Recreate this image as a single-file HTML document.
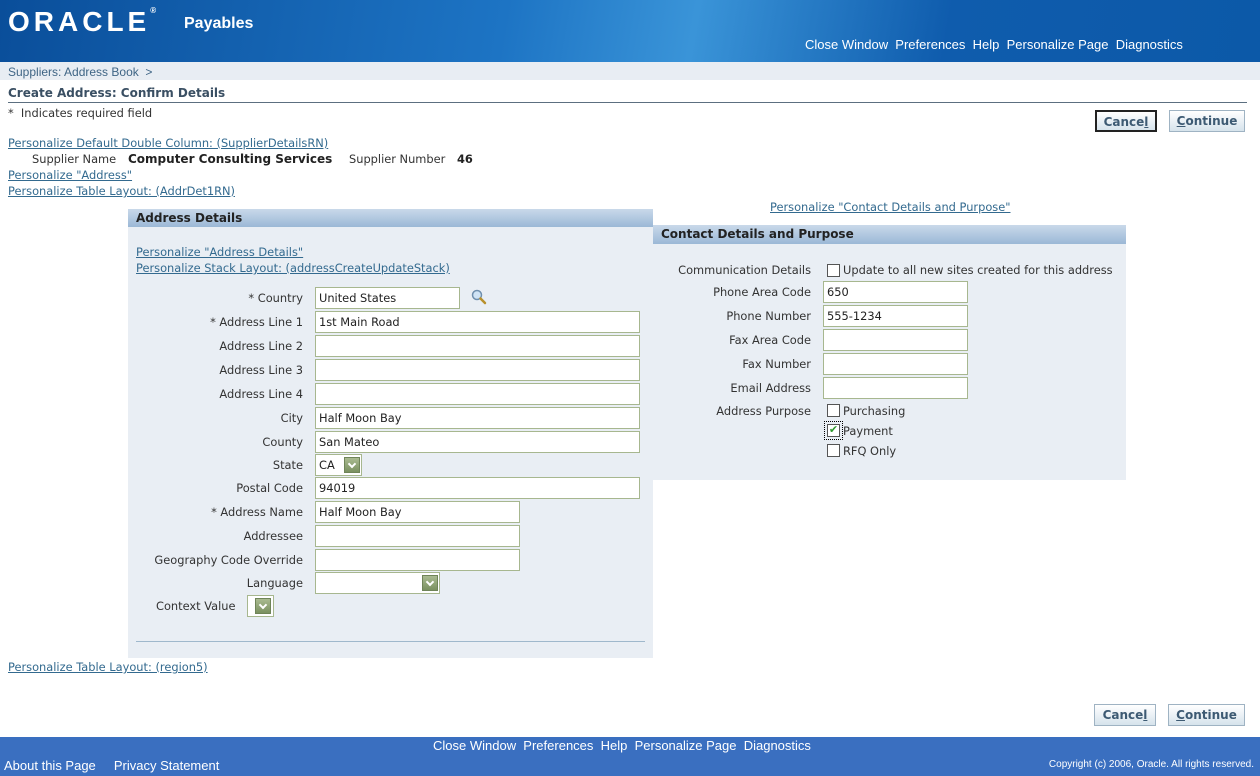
<!DOCTYPE html>
<html><head><meta charset="utf-8"><style>
*{margin:0;padding:0;box-sizing:border-box}
body{width:1260px;height:776px;position:relative;overflow:hidden;background:#fff;font-family:"DejaVu Sans","Liberation Sans",sans-serif;font-size:11.4px;color:#333}
.a{position:absolute;white-space:nowrap}
.lk{color:#336a8f;text-decoration:underline}
.lbl{position:absolute;text-align:right;white-space:nowrap;color:#333}
.in{position:absolute;height:22px;border:1px solid #a7b78f;background:#fff;padding:3px 0 0 3px;color:#222}
.sel{position:absolute;width:16px;height:16px;background:linear-gradient(#a9ba90,#7a9060);border:1px solid #6f8458}
.sel:after{content:"";position:absolute;left:4px;top:3px;width:4px;height:4px;border-right:2px solid #fff;border-bottom:2px solid #fff;transform:rotate(45deg)}
.cb{position:absolute;width:13px;height:13px;border:1px solid #555;background:#fff}
.btn{position:absolute;height:22px;border:1px solid #9fb3c3;background:linear-gradient(#fff,#d6e3ec);color:#3d5a73;font-weight:bold;font-size:12px;text-align:center;line-height:20px}
.hdr{position:absolute;background:linear-gradient(#c9d9ea,#9bb8d6);font-weight:bold;color:#222;font-size:12px;padding:2px 0 0 8px}
</style></head><body>
<div class="a" style="left:0;top:0;width:1260px;height:62px;background:linear-gradient(100deg,#0a4e9a 0%,#1d74c4 40%,#3a94d8 55%,#0f5cad 75%,#0c59a8 100%)"></div>
<div class="a" style="left:8px;top:6px;font-family:'Liberation Sans',sans-serif;font-size:28px;font-weight:bold;color:#fff;letter-spacing:4px">ORACLE<span style="font-size:8px;vertical-align:top;letter-spacing:0">®</span></div>
<div class="a" style="left:184px;top:15px;font-family:'Liberation Sans',sans-serif;font-size:16px;font-weight:bold;color:#fff">Payables</div>
<div class="a" style="left:805px;top:37px;font-family:'Liberation Sans',sans-serif;font-size:13px;color:#fff">Close Window&nbsp; Preferences&nbsp; Help&nbsp; Personalize Page&nbsp; Diagnostics</div>
<div class="a" style="left:0;top:62px;width:1260px;height:18px;background:#e8edf3"></div>
<div class="a" style="left:8px;top:65px;font-size:12px;color:#3f6585;font-family:'Liberation Sans',sans-serif">Suppliers: Address Book &nbsp;&gt;</div>
<div class="a" style="left:8px;top:86px;font-size:12px;font-weight:bold;color:#3a4f63">Create Address: Confirm Details</div>
<div class="a" style="left:8px;top:102px;width:1239px;height:1px;background:#5c6f80"></div>
<div class="a" style="left:8px;top:106px">* &nbsp;Indicates required field</div>
<div class="btn" style="left:1095px;top:110px;width:62px;border:2px solid #222">Cance<u>l</u></div>
<div class="btn" style="left:1169px;top:110px;width:76px"><u>C</u>ontinue</div>
<div class="a lk" style="left:8px;top:136px">Personalize Default Double Column: (SupplierDetailsRN)</div>
<div class="a" style="left:32px;top:152px">Supplier Name</div>
<div class="a" style="left:128px;top:152px;font-weight:bold;font-size:12px;color:#222">Computer Consulting Services</div>
<div class="a" style="left:349px;top:152px">Supplier Number</div>
<div class="a" style="left:457px;top:152px;font-weight:bold;color:#222">46</div>
<div class="a lk" style="left:8px;top:168px">Personalize "Address"</div>
<div class="a lk" style="left:8px;top:184px">Personalize Table Layout: (AddrDet1RN)</div>

<div class="a" style="left:128px;top:209px;width:525px;height:449px;background:#e9eef4"></div>
<div class="hdr" style="left:128px;top:209px;width:525px;height:18px">Address Details</div>
<div class="a lk" style="left:136px;top:245px">Personalize "Address Details"</div>
<div class="a lk" style="left:136px;top:261px">Personalize Stack Layout: (addressCreateUpdateStack)</div>

<div class="lbl" style="right:957px;top:291px">* Country</div><div class="in" style="left:315px;top:287px;width:145px">United States</div>
<svg class="a" style="left:471px;top:289px" width="16" height="16" viewBox="0 0 16 16"><circle cx="6" cy="6" r="4.5" fill="#cfe3f5" stroke="#6f8fae" stroke-width="1.5"/><path d="M9.5 9.5L14 14" stroke="#b8902c" stroke-width="2.5" stroke-linecap="round"/></svg>
<div class="lbl" style="right:957px;top:315px">* Address Line 1</div><div class="in" style="left:315px;top:311px;width:325px">1st Main Road</div>
<div class="lbl" style="right:957px;top:339px">Address Line 2</div><div class="in" style="left:315px;top:335px;width:325px"></div>
<div class="lbl" style="right:957px;top:363px">Address Line 3</div><div class="in" style="left:315px;top:359px;width:325px"></div>
<div class="lbl" style="right:957px;top:387px">Address Line 4</div><div class="in" style="left:315px;top:383px;width:325px"></div>
<div class="lbl" style="right:957px;top:411px">City</div><div class="in" style="left:315px;top:407px;width:325px">Half Moon Bay</div>
<div class="lbl" style="right:957px;top:435px">County</div><div class="in" style="left:315px;top:431px;width:325px">San Mateo</div>
<div class="lbl" style="right:957px;top:458px">State</div><div class="in" style="left:315px;top:454px;width:47px">CA</div><div class="sel" style="left:344px;top:457px"></div>
<div class="lbl" style="right:957px;top:481px">Postal Code</div><div class="in" style="left:315px;top:477px;width:325px">94019</div>
<div class="lbl" style="right:957px;top:505px">* Address Name</div><div class="in" style="left:315px;top:501px;width:205px">Half Moon Bay</div>
<div class="lbl" style="right:957px;top:529px">Addressee</div><div class="in" style="left:315px;top:525px;width:205px"></div>
<div class="lbl" style="right:957px;top:553px">Geography Code Override</div><div class="in" style="left:315px;top:549px;width:205px"></div>
<div class="lbl" style="right:957px;top:576px">Language</div><div class="in" style="left:315px;top:572px;width:125px"></div><div class="sel" style="left:422px;top:575px"></div>
<div class="a" style="left:156px;top:599px">Context Value</div><div class="in" style="left:247px;top:595px;width:27px"></div><div class="sel" style="left:255px;top:598px"></div>
<div class="a" style="left:136px;top:641px;width:509px;height:1px;background:#9fb8cc"></div>

<div class="a lk" style="left:770px;top:200px">Personalize "Contact Details and Purpose"</div>
<div class="a" style="left:653px;top:225px;width:473px;height:255px;background:#e9eef4"></div>
<div class="hdr" style="left:653px;top:225px;width:473px;height:19px">Contact Details and Purpose</div>
<div class="lbl" style="right:449px;top:263px">Communication Details</div>
<div class="cb" style="left:827px;top:264px"></div><div class="a" style="left:843px;top:263px">Update to all new sites created for this address</div>
<div class="lbl" style="right:449px;top:285px">Phone Area Code</div><div class="in" style="left:823px;top:281px;width:145px">650</div>
<div class="lbl" style="right:449px;top:309px">Phone Number</div><div class="in" style="left:823px;top:305px;width:145px">555-1234</div>
<div class="lbl" style="right:449px;top:333px">Fax Area Code</div><div class="in" style="left:823px;top:329px;width:145px"></div>
<div class="lbl" style="right:449px;top:357px">Fax Number</div><div class="in" style="left:823px;top:353px;width:145px"></div>
<div class="lbl" style="right:449px;top:381px">Email Address</div><div class="in" style="left:823px;top:377px;width:145px"></div>
<div class="lbl" style="right:449px;top:404px">Address Purpose</div>
<div class="cb" style="left:827px;top:404px"></div><div class="a" style="left:843px;top:404px">Purchasing</div>
<div class="a" style="left:824px;top:421px;width:19px;height:19px;border:1px dotted #000"></div>
<div class="cb" style="left:827px;top:424px;color:#2f9a2f;font-size:11px;line-height:10px;text-align:center">✔</div><div class="a" style="left:843px;top:424px">Payment</div>
<div class="cb" style="left:827px;top:444px"></div><div class="a" style="left:843px;top:444px">RFQ Only</div>

<div class="a lk" style="left:8px;top:660px">Personalize Table Layout: (region5)</div>
<div class="btn" style="left:1094px;top:704px;width:62px">Cance<u>l</u></div>
<div class="btn" style="left:1168px;top:704px;width:77px"><u>C</u>ontinue</div>

<div class="a" style="left:0;top:737px;width:1260px;height:39px;background:#3a6fc0"></div>
<div class="a" style="left:433px;top:738px;font-family:'Liberation Sans',sans-serif;font-size:13px;color:#fff">Close Window&nbsp; Preferences&nbsp; Help&nbsp; Personalize Page&nbsp; Diagnostics</div>
<div class="a" style="left:4px;top:758px;font-family:'Liberation Sans',sans-serif;font-size:13px;color:#fff">About this Page &nbsp;&nbsp;&nbsp; Privacy Statement</div>
<div class="a" style="right:6px;top:759px;font-family:'Liberation Sans',sans-serif;font-size:10px;color:#fff">Copyright (c) 2006, Oracle. All rights reserved.</div>
</body></html>
